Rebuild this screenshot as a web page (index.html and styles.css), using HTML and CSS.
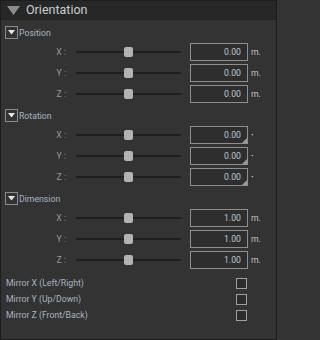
FILE: index.html
```html
<!DOCTYPE html>
<html>
<head>
<meta charset="utf-8">
<link rel="stylesheet" href="styles.css">
</head>
<body>
<div class="panel">
  <div class="panel-header">
    <svg class="header-arrow" width="13" height="9" viewBox="0 0 13 9"><polygon points="0,0 13,0 6.5,9" fill="#8c8c8c"/></svg>
    <span class="header-title">Orientation</span>
  </div>
  <div class="panel-body">
    <section class="group">
      <div class="group-head">
        <span class="toggle"><svg width="7" height="5" viewBox="0 0 7 5"><polygon points="0,0 7,0 3.5,4.5" fill="#e6e6e6"/></svg></span>
        <span class="group-title">Position</span>
      </div>
      <div class="rows">
        <div class="row"><span class="axis">X :</span><div class="slider"><span class="thumb"></span></div><div class="field">0.00</div><span class="unit">m.</span></div>
        <div class="row"><span class="axis">Y :</span><div class="slider"><span class="thumb"></span></div><div class="field">0.00</div><span class="unit">m.</span></div>
        <div class="row"><span class="axis">Z :</span><div class="slider"><span class="thumb"></span></div><div class="field">0.00</div><span class="unit">m.</span></div>
      </div>
    </section>
    <section class="group">
      <div class="group-head">
        <span class="toggle"><svg width="7" height="5" viewBox="0 0 7 5"><polygon points="0,0 7,0 3.5,4.5" fill="#e6e6e6"/></svg></span>
        <span class="group-title">Rotation</span>
      </div>
      <div class="rows">
        <div class="row"><span class="axis">X :</span><div class="slider"><span class="thumb"></span></div><div class="field field-spin">0.00</div><span class="unit unit-deg">·</span></div>
        <div class="row"><span class="axis">Y :</span><div class="slider"><span class="thumb"></span></div><div class="field field-spin">0.00</div><span class="unit unit-deg">·</span></div>
        <div class="row"><span class="axis">Z :</span><div class="slider"><span class="thumb"></span></div><div class="field field-spin">0.00</div><span class="unit unit-deg">·</span></div>
      </div>
    </section>
    <section class="group">
      <div class="group-head">
        <span class="toggle"><svg width="7" height="5" viewBox="0 0 7 5"><polygon points="0,0 7,0 3.5,4.5" fill="#e6e6e6"/></svg></span>
        <span class="group-title">Dimension</span>
      </div>
      <div class="rows">
        <div class="row"><span class="axis">X :</span><div class="slider"><span class="thumb"></span></div><div class="field">1.00</div><span class="unit">m.</span></div>
        <div class="row"><span class="axis">Y :</span><div class="slider"><span class="thumb"></span></div><div class="field">1.00</div><span class="unit">m.</span></div>
        <div class="row"><span class="axis">Z :</span><div class="slider"><span class="thumb"></span></div><div class="field">1.00</div><span class="unit">m.</span></div>
      </div>
    </section>
    <div class="mirrors">
      <div class="mirror-row"><span class="mirror-label">Mirror X (Left/Right)</span><span class="check"></span></div>
      <div class="mirror-row"><span class="mirror-label">Mirror Y (Up/Down)</span><span class="check"></span></div>
      <div class="mirror-row"><span class="mirror-label">Mirror Z (Front/Back)</span><span class="check"></span></div>
    </div>
  </div>
</div>
</body>
</html>
```

FILE: styles.css
```css
html, body {
  margin: 0;
  padding: 0;
  background: #333333;
}

.panel {
  width: 277px;
  height: 340px;
  box-sizing: border-box;
  border: 1px solid #1d1d1d;
  background: #333333;
  font-family: Roboto, "Liberation Sans", sans-serif;
  font-size: 8.7px;
  color: #aab3bd;
  overflow: hidden;
}

.panel-header {
  height: 18px;
  background: #272727;
  border-bottom: 1px solid #222222;
  display: flex;
  align-items: center;
  padding-left: 6px;
}

.header-arrow {
  display: block;
  margin-top: 1px;
}

.header-title {
  margin-left: 6px;
  font-size: 12.5px;
  color: #c8cdd2;
  line-height: 18px;
}

.panel-body {
  padding: 6px 4px 0 4px;
}

.group {
  display: flex;
  flex-direction: column;
  margin-bottom: 6px;
}

.group-head {
  height: 13px;
  display: flex;
  align-items: center;
}

.toggle {
  width: 13px;
  height: 13px;
  box-sizing: border-box;
  border: 1px solid #8a8a8a;
  display: flex;
  align-items: center;
  justify-content: center;
}

.toggle svg {
  display: block;
}

.group-title {
  margin-left: 1px;
  color: #a9b4c0;
}

.rows {
  display: flex;
  flex-direction: column;
  gap: 3px;
  margin-top: 4px;
}

.row {
  height: 18px;
  display: flex;
  align-items: center;
}

.axis {
  width: 61px;
  text-align: right;
  color: #8e99a5;
}

.slider {
  position: relative;
  width: 105px;
  height: 18px;
  margin-left: 10px;
  display: flex;
  align-items: center;
}

.slider::before {
  content: "";
  display: block;
  width: 100%;
  height: 2px;
  background: #1f1f1f;
}

.thumb {
  position: absolute;
  left: 48px;
  top: 4px;
  width: 9px;
  height: 10px;
  border-radius: 2px;
  background: #b3b3b3;
}

.field {
  position: relative;
  width: 58px;
  height: 18px;
  box-sizing: border-box;
  margin-left: 9px;
  border: 1px solid #8f8f8f;
  background: #2e2e2e;
  text-align: right;
  padding-right: 6px;
  line-height: 16px;
  color: #bcc6d0;
}

.field-spin::after {
  content: "";
  position: absolute;
  right: 0;
  bottom: 0;
  width: 0;
  height: 0;
  border-left: 5px solid transparent;
  border-bottom: 5px solid #9a9a9a;
}

.unit {
  margin-left: 3px;
  color: #c4c4c4;
}

.unit-deg {
  font-weight: bold;
  color: #d0d0d0;
}

.mirrors {
  display: flex;
  flex-direction: column;
}

.mirror-row {
  height: 16px;
  display: flex;
  align-items: center;
  justify-content: space-between;
  padding-right: 25px;
  padding-left: 1px;
}

.mirror-label {
  color: #a9b4c0;
}

.check {
  width: 11px;
  height: 11px;
  box-sizing: border-box;
  border: 1px solid #a0a0a0;
  background: #2c2c2c;
}
```
